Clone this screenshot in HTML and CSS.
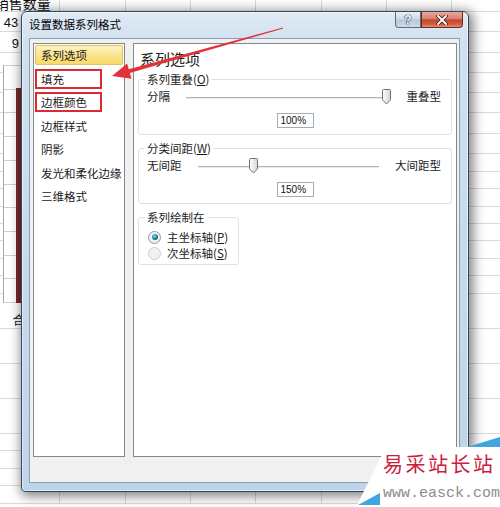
FILE: index.html
```html
<!DOCTYPE html>
<html lang="zh-CN">
<head>
    <meta charset="UTF-8">
    <meta name="viewport" content="width=device-width, initial-scale=1.0">
    <title>设置数据系列格式</title>
    <link rel="stylesheet" href="styles.css">
</head>
<body>
    <div class="screen">
        <div class="sheet">
            <div class="band band-top">
                <div class="cell head">销售数量</div>
                <div class="cell c-43">43</div>
                <div class="cell c-9">9</div>
            </div>
            <div class="band band-low">
                <div class="cell c-sum">合</div>
            </div>
        </div>

        <div class="chart"><div class="bar" style="height: 215px"></div></div>

        <div class="dialog">
            <div class="titlebar">
                <div class="title">设置数据系列格式</div>
                <div class="caption-btns">
                    <div class="cap-btn help">?</div>
                    <div class="cap-btn close">
                        <svg width="12" height="10" viewBox="0 0 12 10">
                            <path d="M2 1 L10 9 M10 1 L2 9" stroke="#4a1a14" stroke-width="3.6" stroke-linecap="square"/>
                            <path d="M2 1 L10 9 M10 1 L2 9" stroke="#fff" stroke-width="1.9" stroke-linecap="square"/>
                        </svg>
                    </div>
                </div>
            </div>
            <div class="client">
                <ul class="nav">
                    <li class="nav-item selected">系列选项</li>
                    <li class="nav-item marked">填充</li>
                    <li class="nav-item marked">边框颜色</li>
                    <li class="nav-item">边框样式</li>
                    <li class="nav-item">阴影</li>
                    <li class="nav-item">发光和柔化边缘</li>
                    <li class="nav-item">三维格式</li>
                </ul>
                <div class="pane">
                    <div class="pane-title">系列选项</div>
                    <fieldset class="group">
                        <legend>系列重叠(<u>O</u>)</legend>
                        <div class="slider-row">
                            <span>分隔</span>
                            <div class="slider" style="--v: 1">
                                <span class="thumb">
                                    <svg width="9" height="16" viewBox="0 0 9 16">
                                        <defs>
                                            <linearGradient id="tg1" x1="0" y1="0" x2="1" y2="0">
                                                <stop offset="0" stop-color="#ffffff"/>
                                                <stop offset="1" stop-color="#d6d6d6"/>
                                            </linearGradient>
                                        </defs>
                                        <path d="M1.5 0.5 H7.5 A1 1 0 0 1 8.5 1.5 V10.8 L4.5 15 L0.5 10.8 V1.5 A1 1 0 0 1 1.5 0.5 Z" fill="url(#tg1)" stroke="#6f6f6f"/>
                                    </svg>
                                </span>
                            </div>
                            <span>重叠型</span>
                        </div>
                        <div class="num-row"><div class="num">100%</div></div>
                    </fieldset>
                    <fieldset class="group">
                        <legend>分类间距(<u>W</u>)</legend>
                        <div class="slider-row">
                            <span>无间距</span>
                            <div class="slider" style="--v: 0.3">
                                <span class="thumb">
                                    <svg width="9" height="16" viewBox="0 0 9 16">
                                        <defs>
                                            <linearGradient id="tg2" x1="0" y1="0" x2="1" y2="0">
                                                <stop offset="0" stop-color="#ffffff"/>
                                                <stop offset="1" stop-color="#d6d6d6"/>
                                            </linearGradient>
                                        </defs>
                                        <path d="M1.5 0.5 H7.5 A1 1 0 0 1 8.5 1.5 V10.8 L4.5 15 L0.5 10.8 V1.5 A1 1 0 0 1 1.5 0.5 Z" fill="url(#tg2)" stroke="#6f6f6f"/>
                                    </svg>
                                </span>
                            </div>
                            <span>大间距型</span>
                        </div>
                        <div class="num-row"><div class="num">150%</div></div>
                    </fieldset>
                    <fieldset class="group axis">
                        <legend>系列绘制在</legend>
                        <div class="radio-row"><span class="radio on"></span><span>主坐标轴(<u>P</u>)</span></div>
                        <div class="radio-row"><span class="radio off"></span><span>次坐标轴(<u>S</u>)</span></div>
                    </fieldset>
                </div>
            </div>
        </div>

        <svg class="arrow" width="500" height="507" viewBox="0 0 500 507">
            <polygon points="112,76 131.5,78.8 129.8,73 283.1,28.6 282.9,27.4 128.8,69.2 127.1,63.4" fill="#e2333a"/>
        </svg>

        <div class="watermark">
            <svg class="wm-bg" width="144" height="71" viewBox="0 0 144 71">
                <polygon points="30,11 144,11 144,71 0,71" fill="#fff"/>
                <polygon points="111,11 144,1 144,11" fill="#3fa6df"/>
                <polygon points="2,69 24,57 24,69" fill="#3fa6df"/>
            </svg>
            <div class="wm-cn">易采站长站</div>
            <div class="wm-url">www.easck.com</div>
        </div>
    </div>
</body>
</html>
```

FILE: styles.css
```css
body {
    margin: 0;
}
.screen {
    position: relative;
    width: 500px;
    height: 507px;
    overflow: hidden;
    background: #fff;
    font-family: "Noto Sans CJK SC", sans-serif;
    color: #1a1a1a;
}

/* spreadsheet behind the dialog */
.sheet {
    margin: -6px 0 0 -5.3px;
}
.band {
    display: grid;
    grid-template-columns: repeat(8, 65.3px);
}
.band-top {
    grid-template-rows: 18px repeat(7, 20.3px);
    background-image:
        repeating-linear-gradient(to right, transparent 0 64.3px, #d8dadd 64.3px 65.3px),
        linear-gradient(to bottom, transparent 0 17px, #d8dadd 17px 18px, transparent 18px),
        repeating-linear-gradient(to bottom, transparent 0 19.3px, #d8dadd 19.3px 20.3px);
    background-position: 0 0, 0 0, 0 18px;
}
.band-low {
    grid-template-rows: repeat(20, 17.5px);
    background-image:
        repeating-linear-gradient(to right, transparent 0 64.3px, #d8dadd 64.3px 65.3px),
        repeating-linear-gradient(to bottom, transparent 0 16.5px, #d8dadd 16.5px 17.5px);
}
.cell {
    grid-column: 1;
    align-self: end;
    font-family: "Liberation Sans", "Noto Sans CJK SC", sans-serif;
    font-size: 13px;
    line-height: 14px;
    padding-bottom: 2px;
    color: #111;
}
.head {
    grid-row: 1;
    font-family: "Noto Sans CJK SC", sans-serif;
    font-size: 14px;
    line-height: 16px;
    padding-bottom: 1px;
}
.c-43 {
    grid-row: 2;
    padding-left: 9px;
}
.c-9 {
    grid-row: 3;
    padding-left: 17px;
}
.c-sum {
    grid-row: 10;
    padding-left: 18px;
    font-family: "Noto Sans CJK SC", sans-serif;
    font-size: 12px;
}

.chart {
    position: absolute;
    left: 3px;
    top: 65px;
    width: 90px;
    height: 238px;
    box-sizing: border-box;
    padding-left: 12px;
    border-left: 1px solid #a8a8a8;
    background: #fff repeating-linear-gradient(to bottom, #cfcfcf 0 1px, transparent 1px 23.7px);
    display: flex;
    align-items: flex-end;
}
.bar {
    width: 5px;
    background: #7a2a2b;
}

/* dialog window */
.dialog {
    position: absolute;
    left: 21px;
    top: 11px;
    width: 448px;
    height: 481px;
    box-sizing: border-box;
    padding: 0 8px 8px 7px;
    border: 1px solid #34465a;
    border-radius: 6px 6px 4px 4px;
    background: linear-gradient(180deg, #e1eaf4 0, #d0e0f0 30px, #bdd4ea 100%);
    box-shadow: inset 0 0 0 1px rgba(255, 255, 255, 0.55), 2px 2px 12px 2px rgba(0, 0, 0, 0.5);
    display: flex;
    flex-direction: column;
}
.titlebar {
    height: 26px;
    display: flex;
    align-items: flex-start;
}
.title {
    flex: 1;
    margin-top: 6px;
    font-size: 11.5px;
    line-height: 12px;
    color: #000;
}
.caption-btns {
    display: flex;
    margin-right: -3px;
}
.cap-btn {
    height: 16px;
    box-sizing: border-box;
    border: 1px solid #5e6e80;
    border-top: none;
    display: flex;
    align-items: center;
    justify-content: center;
}
.help {
    width: 26px;
    border-radius: 0 0 0 4px;
    background: linear-gradient(180deg, #e9f0f7 0, #cbd9e7 48%, #b5c7d9 52%, #cddbe9 100%);
    color: #fff;
    font-family: "Liberation Sans", sans-serif;
    font-weight: bold;
    font-size: 12px;
    text-shadow: 0 0 1px #1d2b3a, 0 0 1px #1d2b3a, 0 0 1px #1d2b3a;
}
.close {
    width: 42px;
    border-color: #6b2a20;
    border-radius: 0 0 4px 0;
    background: linear-gradient(180deg, #eaa99a 0, #d88170 45%, #c4472f 52%, #d35a40 80%, #e58f70 100%);
}

.client {
    flex: 1;
    display: flex;
    gap: 8px;
    background: #f0f0f0;
    border: 1px solid #8b9fb3;
    padding: 4px 2px 25px 3px;
}

/* left list */
.nav {
    width: 92px;
    box-sizing: border-box;
    margin: 0;
    padding: 1px;
    list-style: none;
    background: #fff;
    border: 1px solid #828790;
    display: flex;
    flex-direction: column;
    gap: 3.5px;
}
.nav-item {
    height: 20px;
    box-sizing: border-box;
    padding-left: 6px;
    font-size: 11.5px;
    line-height: 20px;
    white-space: nowrap;
}
.nav-item.selected {
    padding-left: 5px;
    line-height: 18px;
    border: 1px solid #e3c262;
    border-radius: 2px;
    background: linear-gradient(180deg, #fdf3bd 0, #fbe591 50%, #f8d866 100%);
}
.nav-item.marked {
    width: 67px;
    padding-left: 4px;
    line-height: 16px;
    border: 2px solid #db2a31;
}

/* right pane */
.pane {
    flex: 1;
    background: #fff;
    border: 1px solid #828790;
    padding: 6px 4px 0;
}
.pane-title {
    margin: 0 0 5px 2px;
    font-size: 15px;
    line-height: 18px;
    color: #222;
}
.group {
    margin: 0 0 7px;
    padding: 0 10px 6px 6px;
    border: 1px solid #dde2e7;
    border-radius: 3px;
    font-size: 11.5px;
}
.group legend {
    padding: 0 2px;
    font-size: 11.5px;
    line-height: 12px;
}
.slider-row {
    display: flex;
    align-items: center;
    gap: 16px;
    height: 16px;
    margin-top: 3px;
    padding-left: 2px;
    line-height: 16px;
}
.slider {
    flex: 1;
    align-self: stretch;
    position: relative;
}
.slider::before {
    content: "";
    position: absolute;
    left: 0;
    right: 0;
    top: 9px;
    height: 1px;
    background: #b3b3b3;
    border-bottom: 1px solid #ececec;
}
.thumb {
    position: absolute;
    top: 1px;
    left: calc(var(--v) * (100% - 9px));
    width: 9px;
    height: 16px;
}
.thumb svg {
    display: block;
}
.num-row {
    display: flex;
    justify-content: center;
    margin-top: 9px;
    padding-left: 4px;
}
.num {
    width: 37px;
    height: 15px;
    box-sizing: border-box;
    border: 1px solid #a5acb5;
    padding-left: 3px;
    font-family: "Liberation Sans", sans-serif;
    font-size: 10px;
    line-height: 13px;
    color: #111;
}
.group.axis {
    width: 100px;
    box-sizing: border-box;
    padding-bottom: 3px;
}
.radio-row {
    display: flex;
    align-items: center;
    gap: 6px;
    height: 16px;
    padding-left: 3px;
    line-height: 16px;
    white-space: nowrap;
}
.radio-row:first-of-type {
    margin-top: 6px;
}
.radio {
    width: 13px;
    height: 13px;
    box-sizing: border-box;
    border-radius: 50%;
    border: 1px solid #8f9aa5;
    background: radial-gradient(circle at 50% 40%, #fff, #e0e6ec);
    position: relative;
}
.radio.on::after {
    content: "";
    position: absolute;
    inset: 2.5px;
    border-radius: 50%;
    background: radial-gradient(circle at 40% 35%, #86d4f0, #1d6f92 60%, #0e4a66);
}
.radio.off {
    border-color: #c9cdd1;
    background: #f1f1f1;
}

/* annotation arrow and watermark */
.arrow {
    position: absolute;
    left: 0;
    top: 0;
}
.watermark {
    position: absolute;
    left: 356px;
    top: 436px;
    width: 144px;
    height: 71px;
}
.wm-bg {
    position: absolute;
    left: 0;
    top: 0;
}
.wm-cn {
    position: relative;
    margin: 16px 0 0 27px;
    font-size: 20px;
    line-height: 24px;
    letter-spacing: 2.5px;
    color: #cc1d3c;
    white-space: nowrap;
}
.wm-url {
    position: relative;
    margin: 10px 0 0 27px;
    font-family: "Liberation Mono", monospace;
    font-size: 15px;
    line-height: 15px;
    color: #8c8c8c;
    white-space: nowrap;
}
```
